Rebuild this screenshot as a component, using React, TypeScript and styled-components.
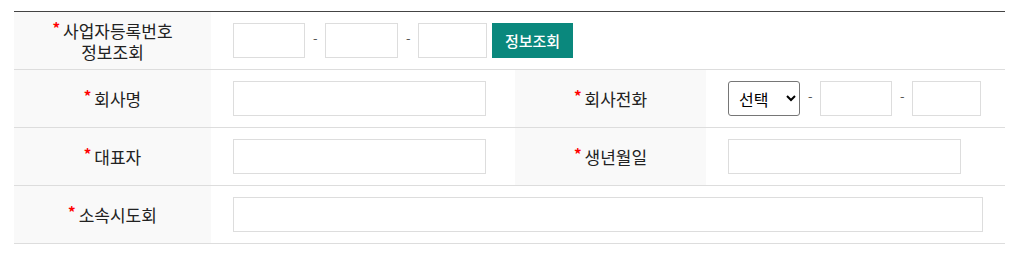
import { styled, createGlobalStyle } from 'styled-components';

const GlobalStyle = createGlobalStyle`
  body {
    margin: 0;
    background: #fff;
    font-family: 'Noto Sans CJK KR', 'Noto Sans', sans-serif;
    color: #333;
  }
`;

const Wrap = styled.div`
  padding: 11px 30px 0 14px;
`;

const FormTable = styled.table`
  width: 100%;
  border-collapse: collapse;
  table-layout: fixed;
  border-top: 1px solid #444;
`;

const Row = styled.tr`
  height: 58px;
  border-bottom: 1px solid #ddd;
`;

const Label = styled.th`
  background: #f9f9f9;
  font-size: 17px;
  font-weight: 400;
  line-height: 21px;
  color: #222;
  text-align: center;
  vertical-align: middle;
  padding: 0;
`;

const Required = styled.span`
  color: #f00;
  font-size: 15px;
  font-weight: 700;
  line-height: 1;
  vertical-align: top;
  margin-right: 3px;
`;

const Cell = styled.td`
  padding: 0 0 0 22px;
  vertical-align: middle;
`;

const Field = styled.div`
  display: flex;
  align-items: center;
`;

const TextInput = styled.input<{ $w: number }>`
  box-sizing: border-box;
  width: ${(p) => p.$w}px;
  height: 35px;
  border: 1px solid #ddd;
  padding: 0 8px;
  font-size: 15px;
  font-family: inherit;
  outline: none;
`;

const Dash = styled.span`
  width: 4px;
  margin: 0 8px;
  font-size: 13px;
  color: #555;
  line-height: 1;
  position: relative;
  top: -3px;
`;

const Button = styled.button`
  box-sizing: border-box;
  width: 81px;
  height: 35px;
  margin-left: 5px;
  border: 0;
  background: #0a887d;
  color: #fff;
  font-family: inherit;
  font-size: 15px;
  font-weight: 500;
  cursor: pointer;
`;

const Select = styled.select`
  box-sizing: border-box;
  width: 72px;
  height: 35px;
  border: 1px solid #767676;
  border-radius: 3px;
  padding: 0 0 0 6px;
  font-family: inherit;
  font-size: 16px;
  color: #000;
  background: #fff;
`;

function Req({ children }: { children: React.ReactNode }) {
  return (
    <>
      <Required>*</Required>
      {children}
    </>
  );
}

export default function App() {
  return (
    <Wrap>
      <GlobalStyle />
      <FormTable>
        <colgroup>
          <col style={{ width: 197 }} />
          <col style={{ width: 304 }} />
          <col style={{ width: 191 }} />
          <col />
        </colgroup>
        <tbody>
          <Row>
            <Label>
              <Req>사업자등록번호</Req>
              <br />
              정보조회
            </Label>
            <Cell colSpan={3}>
              <Field>
                <TextInput $w={72} />
                <Dash>-</Dash>
                <TextInput $w={73} />
                <Dash>-</Dash>
                <TextInput $w={69} />
                <Button type="button">정보조회</Button>
              </Field>
            </Cell>
          </Row>
          <Row>
            <Label>
              <Req>회사명</Req>
            </Label>
            <Cell>
              <TextInput $w={253} />
            </Cell>
            <Label>
              <Req>회사전화</Req>
            </Label>
            <Cell>
              <Field>
                <Select defaultValue="">
                  <option value="">선택</option>
                  <option value="02">02</option>
                  <option value="031">031</option>
                </Select>
                <Dash>-</Dash>
                <TextInput $w={72} />
                <Dash>-</Dash>
                <TextInput $w={69} />
              </Field>
            </Cell>
          </Row>
          <Row>
            <Label>
              <Req>대표자</Req>
            </Label>
            <Cell>
              <TextInput $w={253} />
            </Cell>
            <Label>
              <Req>생년월일</Req>
            </Label>
            <Cell>
              <TextInput $w={233} />
            </Cell>
          </Row>
          <Row>
            <Label>
              <Req>소속시도회</Req>
            </Label>
            <Cell colSpan={3}>
              <TextInput $w={750} />
            </Cell>
          </Row>
        </tbody>
      </FormTable>
    </Wrap>
  );
}
